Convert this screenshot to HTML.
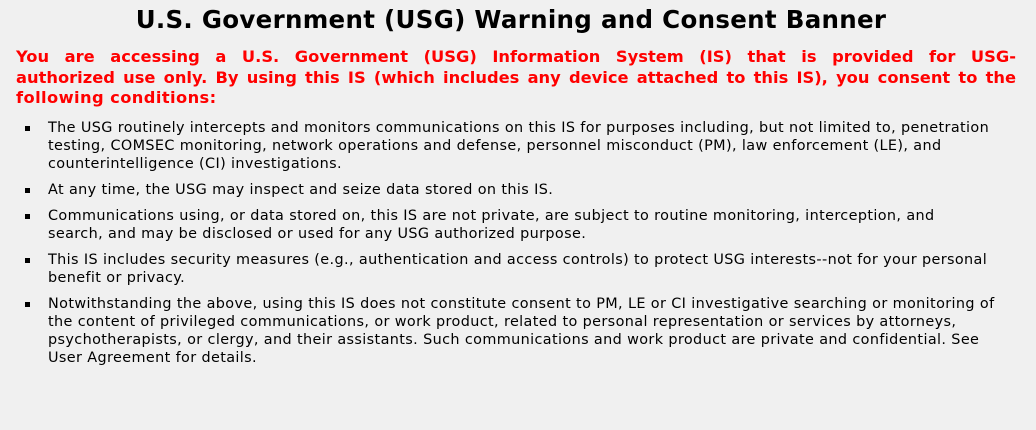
<!DOCTYPE html>
<html><head><meta charset="utf-8"><style>
body{margin:0;background:#f0f0f0;width:1036px;height:430px;overflow:hidden;font-family:"DejaVu Sans","Liberation Sans",sans-serif;}
h1{margin:0;position:absolute;top:3px;left:-7px;width:1036px;text-align:center;font-size:24.5px;font-weight:bold;color:#000;line-height:34px;letter-spacing:0.3px;}
.red{position:absolute;left:16px;top:47px;width:1000px;color:#ff0000;font-weight:bold;font-size:16.3px;line-height:20.5px;}
.red span{display:block;white-space:nowrap;text-align:justify;text-align-last:justify;}
.red span.l{text-align-last:left;letter-spacing:0.4px;}
ul{position:absolute;left:0;top:119px;margin:0;padding:0;list-style:none;font-size:14.4px;line-height:18px;color:#000;letter-spacing:0.38px;}
li{position:relative;padding-left:48px;margin-bottom:8px;}
li::before{content:"";position:absolute;left:25px;top:7px;width:5px;height:5px;background:#000;}
li span{display:block;white-space:nowrap;}
</style></head><body>
<h1>U.S. Government (USG) Warning and Consent Banner</h1>
<div class="red">
<span>You are accessing a U.S. Government (USG) Information System (IS) that is provided for USG-</span>
<span>authorized use only. By using this IS (which includes any device attached to this IS), you consent to the</span>
<span class="l">following conditions:</span>
</div>
<ul>
<li><span>The USG routinely intercepts and monitors communications on this IS for purposes including, but not limited to, penetration</span><span>testing, COMSEC monitoring, network operations and defense, personnel misconduct (PM), law enforcement (LE), and</span><span>counterintelligence (CI) investigations.</span></li>
<li><span>At any time, the USG may inspect and seize data stored on this IS.</span></li>
<li><span>Communications using, or data stored on, this IS are not private, are subject to routine monitoring, interception, and</span><span>search, and may be disclosed or used for any USG authorized purpose.</span></li>
<li><span>This IS includes security measures (e.g., authentication and access controls) to protect USG interests--not for your personal</span><span>benefit or privacy.</span></li>
<li><span>Notwithstanding the above, using this IS does not constitute consent to PM, LE or CI investigative searching or monitoring of</span><span>the content of privileged communications, or work product, related to personal representation or services by attorneys,</span><span>psychotherapists, or clergy, and their assistants. Such communications and work product are private and confidential. See</span><span>User Agreement for details.</span></li>
</ul>
</body></html>
